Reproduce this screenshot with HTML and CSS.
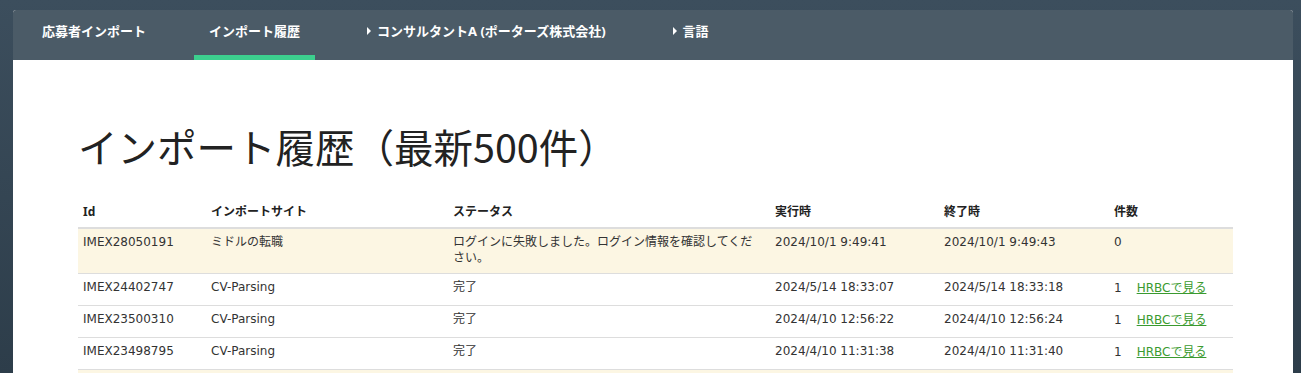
FILE: index.html
```html
<!DOCTYPE html>
<html lang="ja">
<head>
  <meta charset="UTF-8">
  <meta name="viewport" content="width=device-width, initial-scale=1.0">
  <title>インポート履歴</title>
  <link rel="stylesheet" href="styles.css">
</head>
<body>
  <div class="card">
    <nav class="nav">
      <a class="tab">応募者インポート</a>
      <a class="tab active">インポート履歴</a>
      <a class="tab menu"><span class="tri"></span>コンサルタントA (ポーターズ株式会社)</a>
      <a class="tab menu"><span class="tri"></span>言語</a>
    </nav>

    <div class="content">
      <h1>インポート履歴（最新500件）</h1>
      <table class="history">
        <colgroup>
          <col style="width:128px">
          <col style="width:242px">
          <col style="width:322px">
          <col style="width:169px">
          <col style="width:170px">
          <col style="width:124px">
        </colgroup>
        <thead>
          <tr>
            <th>Id</th>
            <th>インポートサイト</th>
            <th>ステータス</th>
            <th>実行時</th>
            <th>終了時</th>
            <th>件数</th>
          </tr>
        </thead>
        <tbody>
          <tr class="failed">
            <td>IMEX28050191</td>
            <td>ミドルの転職</td>
            <td>ログインに失敗しました。ログイン情報を確認してください。</td>
            <td>2024/10/1 9:49:41</td>
            <td>2024/10/1 9:49:43</td>
            <td>0</td>
          </tr>
          <tr>
            <td>IMEX24402747</td>
            <td>CV-Parsing</td>
            <td>完了</td>
            <td>2024/5/14 18:33:07</td>
            <td>2024/5/14 18:33:18</td>
            <td>1<a class="link" href="#">HRBCで見る</a></td>
          </tr>
          <tr>
            <td>IMEX23500310</td>
            <td>CV-Parsing</td>
            <td>完了</td>
            <td>2024/4/10 12:56:22</td>
            <td>2024/4/10 12:56:24</td>
            <td>1<a class="link" href="#">HRBCで見る</a></td>
          </tr>
          <tr>
            <td>IMEX23498795</td>
            <td>CV-Parsing</td>
            <td>完了</td>
            <td>2024/4/10 11:31:38</td>
            <td>2024/4/10 11:31:40</td>
            <td>1<a class="link" href="#">HRBCで見る</a></td>
          </tr>
          <tr class="failed">
            <td>IMEX23311002</td>
            <td>ミドルの転職</td>
            <td>ログインに失敗しました。</td>
            <td>2024/4/3 9:12:10</td>
            <td>2024/4/3 9:12:12</td>
            <td>0</td>
          </tr>
        </tbody>
      </table>
    </div>
  </div>
</body>
</html>
```

FILE: styles.css
```css
html, body { height: 100%; }
body {
  margin: 0; overflow: hidden;
  background: linear-gradient(to bottom, #3c4e5d, #2d3d4a);
  font-family: "DejaVu Sans", "Noto Sans CJK JP", sans-serif;
  color: #333;
}
.card {
  margin: 10px 8px 0 13px; background: #fff; min-height: 400px;
  border-radius: 3px 3px 0 0; overflow: hidden;
}
.nav {
  display: flex; gap: 33px; height: 50px; padding-left: 14px;
  background: #4b5b67;
}
.tab {
  display: flex; align-items: flex-start; box-sizing: border-box; height: 50px;
  padding: 12px 15px 0; line-height: 18px;
  color: #fff; font-size: 13px; font-weight: bold; text-decoration: none;
  font-family: "Noto Sans", "Noto Sans CJK JP", sans-serif;
}
.tab.active { border-bottom: 5px solid #3ccf8e; }
.tab.menu { margin-left: 4px; }
.tri {
  width: 0; height: 0; margin: 5px 6px 0 0;
  border-top: 4px solid transparent; border-bottom: 4px solid transparent;
  border-left: 4px solid #fff;
}
.content { padding: 62px 60px 0 65px; }
h1 {
  margin: 0 0 29px; font-size: 39.5px; line-height: 48px; font-weight: normal;
  color: #222; font-family: "Noto Sans CJK JP", sans-serif;
}
.history {
  width: 1155px; table-layout: fixed; border-collapse: collapse;
  font-size: 12px; line-height: 16px;
}
.history th {
  text-align: left; padding: 5px 5px 7px; color: #222; font-weight: bold;
  font-family: "Noto Sans", "Noto Sans CJK JP", sans-serif;
  border-bottom: 2px solid #ddd;
}
.history td {
  vertical-align: top; padding: 5px 10px 7px 5px; border-bottom: 1px solid #ddd;
}
.history tr.failed td { background: #fcf6e3; }
.link {
  display: inline-block; padding: 1px 0 2px; margin-left: 15px;
  color: #3a9a2f; text-decoration: underline;
}
```
